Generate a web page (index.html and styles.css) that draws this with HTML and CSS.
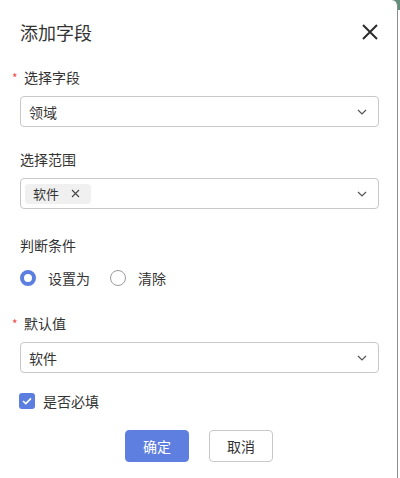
FILE: index.html
```html
<!DOCTYPE html>
<html lang="zh-CN">

<head>
    <meta charset="UTF-8">
    <meta name="viewport" content="width=device-width, initial-scale=1.0">
    <title>添加字段</title>
    <link rel="stylesheet" href="styles.css">
</head>

<body>
    <div class="dialog">
        <div class="dialog-header">
            <span class="dialog-title">添加字段</span>
            <svg class="close" width="16" height="16" viewBox="0 0 16 16">
                <path d="M1 1L15 15M15 1L1 15" stroke="#2b2b2b" stroke-width="2" fill="none" />
            </svg>
        </div>

        <!-- 选择字段 -->
        <div class="field first">
            <div class="field-label"><span class="req">*</span>选择字段</div>
            <div class="select">
                <span class="select-value">领域</span>
                <svg class="arrow" width="10" height="6" viewBox="0 0 10 6">
                    <path d="M1 1L5 5L9 1" stroke="#555" stroke-width="1.2" fill="none" />
                </svg>
            </div>
        </div>

        <!-- 选择范围 -->
        <div class="field">
            <div class="field-label">选择范围</div>
            <div class="select multi">
                <span class="tag">软件
                    <svg class="tag-close" width="9" height="9" viewBox="0 0 9 9">
                        <path d="M1 1L8 8M8 1L1 8" stroke="#444" stroke-width="1.1" fill="none" />
                    </svg>
                </span>
                <svg class="arrow" width="10" height="6" viewBox="0 0 10 6">
                    <path d="M1 1L5 5L9 1" stroke="#555" stroke-width="1.2" fill="none" />
                </svg>
            </div>
        </div>

        <!-- 判断条件 -->
        <div class="field cond">
            <div class="field-label">判断条件</div>
            <div class="radio-group">
                <label class="radio checked"><span class="radio-dot"></span>设置为</label>
                <label class="radio"><span class="radio-dot"></span>清除</label>
            </div>
        </div>

        <!-- 默认值 -->
        <div class="field default">
            <div class="field-label"><span class="req">*</span>默认值</div>
            <div class="select">
                <span class="select-value">软件</span>
                <svg class="arrow" width="10" height="6" viewBox="0 0 10 6">
                    <path d="M1 1L5 5L9 1" stroke="#555" stroke-width="1.2" fill="none" />
                </svg>
            </div>
        </div>

        <label class="checkbox">
            <span class="checkbox-box">
                <svg width="10" height="8" viewBox="0 0 10 8">
                    <path d="M1 4L3.8 6.6L9 1.4" stroke="#fff" stroke-width="1.6" fill="none" />
                </svg>
            </span>
            是否必填
        </label>

        <div class="dialog-footer">
            <button class="btn primary">确定</button>
            <button class="btn">取消</button>
        </div>
    </div>
</body>

</html>
```

FILE: styles.css
```css
html,
body {
    margin: 0;
    height: 100%;
}

body {
    font-family: "Noto Sans CJK SC", "Noto Sans", sans-serif;
    font-size: 14px;
    color: #333;
    background: linear-gradient(#5f8f7c 0, #5f8f7c 10px, white 10px);
}

.dialog {
    box-sizing: border-box;
    width: 398px;
    height: 478px;
    padding: 20px 18px 0 20px;
    background: white;
    border-right: 1px solid #8c8c8c;
    border-top-right-radius: 6px;
}

.dialog-header {
    display: flex;
    justify-content: space-between;
    align-items: center;
    height: 24px;
}

.dialog-title {
    font-size: 18px;
    line-height: 24px;
    color: #333;
}

.close {
    margin-right: 1px;
    margin-top: -1px;
}

.field {
    margin-top: 22px;
}

.field.first {
    margin-top: 23px;
}

.field.cond {
    margin-top: 26px;
}

.field.default {
    margin-top: 25px;
}

.field-label {
    height: 20px;
    line-height: 20px;
    margin-bottom: 9px;
}

.req {
    display: inline-block;
    width: 12px;
    margin-left: -8px;
    color: #f04b4b;
    font-size: 12px;
}

.select {
    box-sizing: border-box;
    height: 31px;
    display: flex;
    align-items: center;
    justify-content: space-between;
    padding: 0 11px 0 8px;
    border: 1px solid #c8c8c8;
    border-radius: 4px;
}

.select.multi {
    padding-left: 4px;
}

.tag {
    display: inline-flex;
    align-items: center;
    height: 20px;
    padding: 0 11px 0 8px;
    background: #f0f0f0;
    border-radius: 4px;
    font-size: 13px;
}

.tag-close {
    margin-left: 12px;
}

.radio-group {
    display: flex;
    align-items: center;
    gap: 20px;
    height: 20px;
    margin-top: 13px;
}

.radio {
    display: flex;
    align-items: center;
    gap: 12px;
}

.radio-dot {
    box-sizing: border-box;
    width: 16px;
    height: 16px;
    border: 1px solid #9a9a9a;
    border-radius: 50%;
}

.radio.checked .radio-dot {
    border: 4.5px solid #5b7ee0;
}

.checkbox {
    display: flex;
    align-items: center;
    gap: 8px;
    height: 20px;
    margin-top: 18px;
    margin-left: -1px;
}

.checkbox-box {
    width: 16px;
    height: 16px;
    border-radius: 3px;
    background: #5b7ee0;
    display: flex;
    align-items: center;
    justify-content: center;
}

.dialog-footer {
    display: flex;
    justify-content: center;
    gap: 20px;
    margin-top: 19px;
    margin-left: -1px;
}

.btn {
    box-sizing: border-box;
    width: 64px;
    height: 32px;
    border: 1px solid #c8c8c8;
    border-radius: 4px;
    background: white;
    color: #333;
    font-family: inherit;
    font-size: 14px;
    cursor: pointer;
}

.btn.primary {
    background-color: #5f7fe0;
    border-color: #5f7fe0;
    color: white;
}
```
